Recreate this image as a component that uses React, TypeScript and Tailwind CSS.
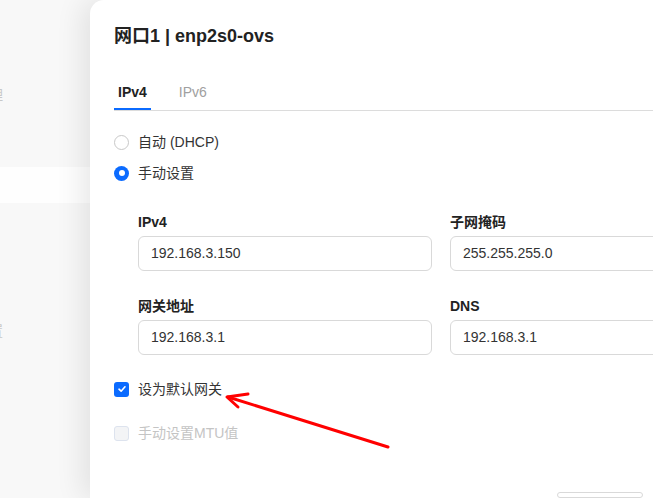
import React from "react";

const font = { fontFamily: '"Liberation Sans", "Noto Sans CJK SC", sans-serif' };

function Radio({ checked, label }: { checked?: boolean; label: string }) {
  return (
    <label className="flex items-center h-[20px] gap-[9px]">
      {checked ? (
        <span className="w-[15px] h-[15px] rounded-full bg-[#0b6bff] flex items-center justify-center">
          <span className="w-[6px] h-[6px] rounded-full bg-white" />
        </span>
      ) : (
        <span className="w-[15px] h-[15px] rounded-full border border-[#c8c8c8] bg-white" />
      )}
      <span className="text-[14px] text-[#333]">{label}</span>
    </label>
  );
}

function Check({ checked, disabled, label }: { checked?: boolean; disabled?: boolean; label: string }) {
  return (
    <label className="flex items-center h-[20px] gap-[9px]">
      {checked ? (
        <span className="w-[15px] h-[15px] rounded-[3px] bg-[#0b6bff] flex items-center justify-center">
          <svg width="10" height="10" viewBox="0 0 10 10">
            <path d="M2 5.2 L4.1 7.2 L8 2.8" fill="none" stroke="white" strokeWidth="1.6" strokeLinecap="round" strokeLinejoin="round" />
          </svg>
        </span>
      ) : (
        <span className="w-[15px] h-[15px] rounded-[3px] border border-[#dde3ee] bg-[#f3f4f6]" />
      )}
      <span className={`text-[14px] ${disabled ? "text-[#c4c4c4]" : "text-[#333]"}`}>{label}</span>
    </label>
  );
}

function Field({ label, value }: { label: string; value: string }) {
  return (
    <div className="w-[294px] flex flex-col">
      <div className="h-[20px] leading-[20px] text-[14px] font-bold text-[#222] mb-[4px]">{label}</div>
      <div className="h-[35px] rounded-[6px] border border-[#d9d9d9] flex items-center px-[12px] text-[14px] text-[#333]">
        {value}
      </div>
    </div>
  );
}

export default function App() {
  return (
    <div className="w-[653px] h-[498px] overflow-hidden relative bg-[#f8f8f8] flex" style={font}>
      <div className="w-[90px] shrink-0 flex flex-col overflow-hidden">
        <div className="h-[85px]" />
        <div className="h-[20px] leading-[20px] text-[14px] text-[#c8c8c8] -ml-[11px]">理</div>
        <div className="h-[62px]" />
        <div className="h-[36px] bg-[#fefefe]" />
        <div className="h-[118px]" />
        <div className="h-[20px] leading-[20px] text-[14px] text-[#c8c8c8] -ml-[11px]">置</div>
      </div>
      <div className="w-[720px] shrink-0 bg-white rounded-tl-[14px] shadow-[-8px_0_28px_rgba(0,0,0,0.09)] pt-[26px] pl-[24px] flex flex-col">
        <div className="h-[20px] leading-[20px] text-[18px] font-bold text-[#222]">网口1 | enp2s0-ovs</div>
        <div className="mt-[27px] flex border-b border-[#dcdcdc] w-[600px]">
          <div className="px-[4px] pt-[9px] pb-[6px] border-b-2 border-[#0b6bff] text-[14px] leading-[20px] font-bold text-[#222]">
            IPv4
          </div>
          <div className="ml-[24px] px-[4px] pt-[9px] pb-[6px] border-b-2 border-transparent text-[14px] leading-[20px] text-[#a0a0a0]">
            IPv6
          </div>
        </div>
        <div className="mt-[21px] flex flex-col gap-[11px]">
          <Radio label="自动 (DHCP)" />
          <Radio checked label="手动设置" />
        </div>
        <div className="mt-[29px] ml-[24px] grid grid-cols-[294px_294px] gap-x-[18px] gap-y-[25px]">
          <Field label="IPv4" value="192.168.3.150" />
          <Field label="子网掩码" value="255.255.255.0" />
          <Field label="网关地址" value="192.168.3.1" />
          <Field label="DNS" value="192.168.3.1" />
        </div>
        <div className="mt-[24px] flex flex-col gap-[24px]">
          <Check checked label="设为默认网关" />
          <Check disabled label="手动设置MTU值" />
        </div>
        <div className="mt-[49px] ml-[443px] w-[86px] h-[32px] rounded-[6px] border border-[#d9d9d9]" />
      </div>
      <svg className="absolute left-0 top-0 pointer-events-none" width="653" height="498">
        <g stroke="#ff0000" strokeWidth="3" strokeLinecap="round" fill="none">
          <path d="M388 447 L228 397" />
          <path d="M248 394 L227 397 L238 407" strokeLinejoin="round" />
        </g>
      </svg>
    </div>
  );
}
